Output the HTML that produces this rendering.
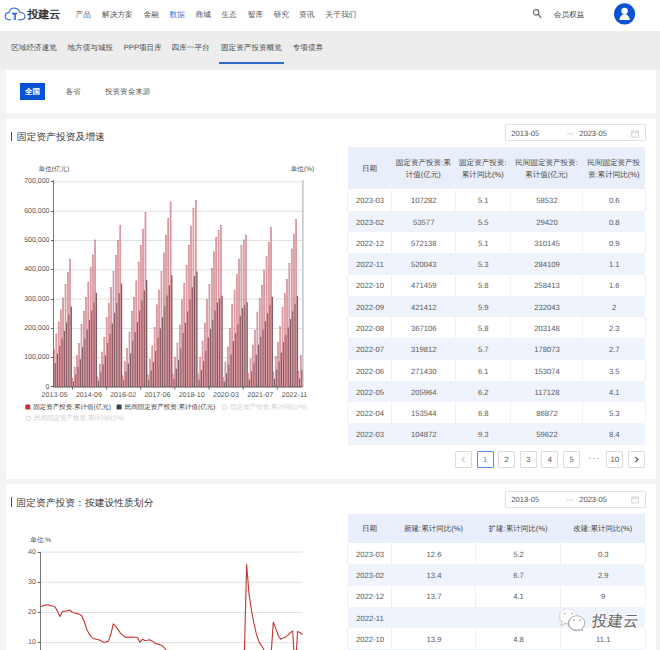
<!DOCTYPE html>
<html><head><meta charset="utf-8">
<style>
*{margin:0;padding:0;box-sizing:border-box}
html,body{width:660px;height:650px;overflow:hidden;background:#f3f3f3;font-family:"Liberation Sans", sans-serif;color:#333;text-rendering:geometricPrecision}
.abs{position:absolute}
.tx{white-space:nowrap}
.hdr{left:0;top:0;width:660px;height:30.5px;background:#fff}
.card{background:#fff;left:5.6px;width:650.6px}
.tbar{width:1.6px;background:#1a4fc4}
.thd{background:#e9effa}
.tro{background:#fff}
.tre{background:#eef3fc}
.vl{width:1px;background:#f0f0f0}
.pgb{width:17px;height:17px;border:0.8px solid #dcdcdc;background:#fff;border-radius:1px}
.pgb.act{border-color:#4d8ee8}
.dp{width:141px;height:17px;border:0.8px solid #e0e0e0;border-radius:1px;background:#fff}
.g{stroke:#d6d6d6;stroke-width:0.75}
.ax{stroke:#555;stroke-width:0.9}
.bt{fill:#f4c0c6;stroke:#bc5c68;stroke-width:0.45}
.bp{fill:#825a61}
</style></head><body>
<div class="abs hdr"></div>
<div class="abs" style="left:0;top:30.5px;width:660px;height:38.8px;background:#ededed"></div>
<svg class="abs" style="left:0;top:0" width="30" height="26" viewBox="0 0 30 26">
<path d="M10.6 19.55 L8.9 19.55 C6.7 19.55 5.25 18.1 5.25 16.15 C5.25 14.2 6.8 12.75 8.85 12.75 C9.35 10.1 11.55 8.05 14.3 8.05 C17 8.05 19.2 9.85 19.75 12.35 C22.7 12.35 25.05 14 25.05 16.15 C25.05 18.15 23.55 19.55 21.5 19.55 L18.6 19.55" fill="none" stroke="#4a80e2" stroke-width="1.35" stroke-linecap="round" stroke-linejoin="round"/>
<rect x="12.1" y="12.8" width="5" height="1.6" fill="#2d5cd4"/>
<rect x="13.75" y="13" width="2.2" height="6.8" fill="#2d5cd4"/>
<rect x="14.45" y="14.6" width="0.8" height="4.2" fill="#a9c3f2"/>
</svg>
<svg class="abs" style="left:532px;top:8.5px" width="11" height="11" viewBox="0 0 11 11"><circle cx="4.15" cy="3.35" r="2.75" fill="none" stroke="#666" stroke-width="1.05"/><line x1="6.2" y1="5.4" x2="8.9" y2="8.6" stroke="#666" stroke-width="1.2" stroke-linecap="round"/></svg>
<svg class="abs" style="left:612.5px;top:3px" width="23" height="23" viewBox="0 0 23 23"><circle cx="11.6" cy="10.9" r="10.6" fill="#0c52d2"/><circle cx="11.6" cy="8.0" r="3.2" fill="#fff"/><path d="M6.5 17.1 C6.5 13.6 8.6 11.2 11.6 11.2 C14.6 11.2 16.7 13.6 16.7 17.1 Z" fill="#fff"/></svg>
<div class="abs" style="left:218.5px;top:62px;width:65px;height:2px;background:#3368cc"></div>
<div class="abs card" style="top:69.5px;height:43.5px"></div>
<div class="abs" style="left:20px;top:82.5px;width:25px;height:17px;background:#0b52d6"></div>
<div class="abs card" style="top:118.5px;height:360px"></div>
<div class="abs tbar" style="left:10.8px;top:131.5px;height:9.5px"></div>
<svg class="abs" style="left:0;top:0" width="340" height="480" viewBox="0 0 340 480">
<line x1="53.5" y1="387.00" x2="302.5" y2="387.00" class="g"/><line x1="51.0" y1="386.50" x2="53.5" y2="386.50" class="ax"/><line x1="53.5" y1="357.70" x2="302.5" y2="357.70" class="g"/><line x1="51.0" y1="357.50" x2="53.5" y2="357.50" class="ax"/><line x1="53.5" y1="328.40" x2="302.5" y2="328.40" class="g"/><line x1="51.0" y1="328.50" x2="53.5" y2="328.50" class="ax"/><line x1="53.5" y1="299.10" x2="302.5" y2="299.10" class="g"/><line x1="51.0" y1="299.50" x2="53.5" y2="299.50" class="ax"/><line x1="53.5" y1="269.80" x2="302.5" y2="269.80" class="g"/><line x1="51.0" y1="269.50" x2="53.5" y2="269.50" class="ax"/><line x1="53.5" y1="240.50" x2="302.5" y2="240.50" class="g"/><line x1="51.0" y1="240.50" x2="53.5" y2="240.50" class="ax"/><line x1="53.5" y1="211.20" x2="302.5" y2="211.20" class="g"/><line x1="51.0" y1="211.50" x2="53.5" y2="211.50" class="ax"/><line x1="53.5" y1="181.90" x2="302.5" y2="181.90" class="g"/><line x1="51.0" y1="181.50" x2="53.5" y2="181.50" class="ax"/>
<rect x="53.592" y="349.06" width="1.0" height="37.94" class="bt"/><rect x="54.642" y="363.10" width="1.3" height="23.90" class="bp"/><rect x="55.877" y="333.88" width="1.0" height="53.12" class="bt"/><rect x="56.927" y="353.53" width="1.3" height="33.47" class="bp"/><rect x="58.161" y="321.95" width="1.0" height="65.05" class="bt"/><rect x="59.211" y="346.02" width="1.3" height="40.98" class="bp"/><rect x="60.445" y="309.94" width="1.0" height="77.06" class="bt"/><rect x="61.495" y="338.45" width="1.3" height="48.55" class="bp"/><rect x="62.730" y="297.93" width="1.0" height="89.07" class="bt"/><rect x="63.780" y="330.88" width="1.3" height="56.12" class="bp"/><rect x="65.014" y="284.45" width="1.0" height="102.55" class="bt"/><rect x="66.064" y="322.39" width="1.3" height="64.61" class="bp"/><rect x="67.299" y="272.14" width="1.0" height="114.86" class="bt"/><rect x="68.349" y="314.64" width="1.3" height="72.36" class="bp"/><rect x="69.583" y="259.11" width="1.0" height="127.89" class="bt"/><rect x="70.633" y="306.43" width="1.3" height="80.57" class="bp"/><rect x="71.867" y="378.21" width="1.0" height="8.79" class="bt"/><rect x="72.917" y="381.37" width="1.3" height="5.63" class="bp"/><rect x="74.152" y="366.99" width="1.0" height="20.01" class="bt"/><rect x="75.202" y="374.19" width="1.3" height="12.81" class="bp"/><rect x="76.436" y="355.65" width="1.0" height="31.35" class="bt"/><rect x="77.486" y="366.94" width="1.3" height="20.06" class="bp"/><rect x="78.721" y="343.64" width="1.0" height="43.36" class="bt"/><rect x="79.771" y="359.25" width="1.3" height="27.75" class="bp"/><rect x="81.005" y="324.59" width="1.0" height="62.41" class="bt"/><rect x="82.055" y="347.06" width="1.3" height="39.94" class="bp"/><rect x="83.289" y="311.41" width="1.0" height="75.59" class="bt"/><rect x="84.339" y="338.62" width="1.3" height="48.38" class="bp"/><rect x="85.574" y="297.34" width="1.0" height="89.66" class="bt"/><rect x="86.624" y="329.62" width="1.3" height="57.38" class="bp"/><rect x="87.858" y="282.11" width="1.0" height="104.89" class="bt"/><rect x="88.908" y="319.87" width="1.3" height="67.13" class="bp"/><rect x="90.143" y="267.46" width="1.0" height="119.54" class="bt"/><rect x="91.193" y="310.49" width="1.3" height="76.51" class="bp"/><rect x="92.427" y="254.86" width="1.0" height="132.14" class="bt"/><rect x="93.477" y="302.43" width="1.3" height="84.57" class="bp"/><rect x="94.711" y="239.91" width="1.0" height="147.09" class="bt"/><rect x="95.761" y="292.86" width="1.3" height="94.14" class="bp"/><rect x="96.996" y="376.89" width="1.0" height="10.11" class="bt"/><rect x="98.046" y="380.53" width="1.3" height="6.47" class="bp"/><rect x="99.280" y="364.29" width="1.0" height="22.71" class="bt"/><rect x="100.330" y="372.47" width="1.3" height="14.53" class="bp"/><rect x="101.565" y="351.99" width="1.0" height="35.01" class="bt"/><rect x="102.615" y="364.59" width="1.3" height="22.41" class="bp"/><rect x="103.849" y="337.48" width="1.0" height="49.52" class="bt"/><rect x="104.899" y="355.31" width="1.3" height="31.69" class="bp"/><rect x="106.133" y="317.56" width="1.0" height="69.44" class="bt"/><rect x="107.183" y="342.56" width="1.3" height="44.44" class="bp"/><rect x="108.418" y="303.50" width="1.0" height="83.50" class="bt"/><rect x="109.468" y="333.56" width="1.3" height="53.44" class="bp"/><rect x="110.702" y="287.67" width="1.0" height="99.33" class="bt"/><rect x="111.752" y="323.43" width="1.3" height="63.57" class="bp"/><rect x="112.987" y="271.26" width="1.0" height="115.73" class="bt"/><rect x="114.037" y="312.93" width="1.3" height="74.07" class="bp"/><rect x="115.271" y="255.74" width="1.0" height="131.26" class="bt"/><rect x="116.321" y="302.99" width="1.3" height="84.01" class="bp"/><rect x="117.556" y="240.50" width="1.0" height="146.50" class="bt"/><rect x="118.606" y="293.24" width="1.3" height="93.76" class="bp"/><rect x="119.840" y="225.38" width="1.0" height="161.62" class="bt"/><rect x="120.890" y="283.56" width="1.3" height="103.44" class="bp"/><rect x="122.124" y="375.87" width="1.0" height="11.13" class="bt"/><rect x="123.174" y="380.19" width="1.3" height="6.81" class="bp"/><rect x="124.409" y="361.80" width="1.0" height="25.20" class="bt"/><rect x="125.459" y="371.58" width="1.3" height="15.42" class="bp"/><rect x="126.693" y="348.62" width="1.0" height="38.38" class="bt"/><rect x="127.743" y="363.51" width="1.3" height="23.49" class="bp"/><rect x="128.978" y="332.21" width="1.0" height="54.79" class="bt"/><rect x="130.028" y="353.47" width="1.3" height="33.53" class="bp"/><rect x="131.262" y="311.29" width="1.0" height="75.71" class="bt"/><rect x="132.312" y="340.66" width="1.3" height="46.34" class="bp"/><rect x="133.546" y="297.34" width="1.0" height="89.66" class="bt"/><rect x="134.596" y="332.13" width="1.3" height="54.87" class="bp"/><rect x="135.831" y="280.93" width="1.0" height="106.07" class="bt"/><rect x="136.881" y="322.09" width="1.3" height="64.91" class="bp"/><rect x="138.115" y="262.18" width="1.0" height="124.82" class="bt"/><rect x="139.165" y="310.61" width="1.3" height="76.39" class="bp"/><rect x="140.400" y="245.77" width="1.0" height="141.23" class="bt"/><rect x="141.450" y="300.57" width="1.3" height="86.43" class="bp"/><rect x="142.684" y="229.07" width="1.0" height="157.93" class="bt"/><rect x="143.734" y="290.35" width="1.3" height="96.65" class="bp"/><rect x="144.968" y="212.23" width="1.0" height="174.77" class="bt"/><rect x="146.018" y="280.04" width="1.3" height="106.96" class="bp"/><rect x="147.253" y="374.99" width="1.0" height="12.01" class="bt"/><rect x="148.303" y="379.74" width="1.3" height="7.26" class="bp"/><rect x="149.537" y="359.52" width="1.0" height="27.48" class="bt"/><rect x="150.587" y="370.40" width="1.3" height="16.60" class="bp"/><rect x="151.822" y="345.98" width="1.0" height="41.02" class="bt"/><rect x="152.872" y="362.22" width="1.3" height="24.78" class="bp"/><rect x="154.106" y="327.52" width="1.0" height="59.48" class="bt"/><rect x="155.156" y="351.07" width="1.3" height="35.93" class="bp"/><rect x="156.390" y="304.78" width="1.0" height="82.22" class="bt"/><rect x="157.440" y="337.34" width="1.3" height="49.66" class="bp"/><rect x="158.675" y="290.02" width="1.0" height="96.98" class="bt"/><rect x="159.725" y="328.42" width="1.3" height="58.58" class="bp"/><rect x="160.959" y="271.56" width="1.0" height="115.44" class="bt"/><rect x="162.009" y="317.27" width="1.3" height="69.73" class="bp"/><rect x="163.244" y="252.81" width="1.0" height="134.19" class="bt"/><rect x="164.294" y="305.95" width="1.3" height="81.05" class="bp"/><rect x="165.528" y="235.52" width="1.0" height="151.48" class="bt"/><rect x="166.578" y="295.51" width="1.3" height="91.49" class="bp"/><rect x="167.812" y="218.23" width="1.0" height="168.77" class="bt"/><rect x="168.862" y="285.06" width="1.3" height="101.94" class="bp"/><rect x="170.097" y="201.91" width="1.0" height="185.09" class="bt"/><rect x="171.147" y="275.21" width="1.3" height="111.79" class="bp"/><rect x="172.381" y="374.02" width="1.0" height="12.98" class="bt"/><rect x="173.431" y="378.95" width="1.3" height="8.05" class="bp"/><rect x="174.666" y="357.70" width="1.0" height="29.30" class="bt"/><rect x="175.716" y="368.83" width="1.3" height="18.17" class="bp"/><rect x="176.950" y="343.05" width="1.0" height="43.95" class="bt"/><rect x="178.000" y="359.75" width="1.3" height="27.25" class="bp"/><rect x="179.234" y="324.88" width="1.0" height="62.12" class="bt"/><rect x="180.284" y="348.49" width="1.3" height="38.51" class="bp"/><rect x="181.519" y="299.89" width="1.0" height="87.11" class="bt"/><rect x="182.569" y="332.99" width="1.3" height="54.01" class="bp"/><rect x="183.803" y="283.57" width="1.0" height="103.43" class="bt"/><rect x="184.853" y="322.87" width="1.3" height="64.13" class="bp"/><rect x="186.088" y="265.11" width="1.0" height="121.89" class="bt"/><rect x="187.138" y="311.43" width="1.3" height="75.57" class="bp"/><rect x="188.372" y="245.48" width="1.0" height="141.52" class="bt"/><rect x="189.422" y="299.26" width="1.3" height="87.74" class="bp"/><rect x="190.656" y="226.14" width="1.0" height="160.86" class="bt"/><rect x="191.706" y="287.27" width="1.3" height="99.73" class="bp"/><rect x="192.941" y="207.98" width="1.0" height="179.02" class="bt"/><rect x="193.991" y="276.01" width="1.3" height="110.99" class="bp"/><rect x="195.225" y="200.77" width="1.0" height="186.23" class="bt"/><rect x="196.275" y="271.54" width="1.3" height="115.46" class="bp"/><rect x="197.510" y="373.87" width="1.0" height="13.13" class="bt"/><rect x="198.560" y="379.58" width="1.3" height="7.42" class="bp"/><rect x="199.794" y="357.14" width="1.0" height="29.86" class="bt"/><rect x="200.844" y="370.13" width="1.3" height="16.87" class="bp"/><rect x="202.078" y="341.38" width="1.0" height="45.62" class="bt"/><rect x="203.128" y="361.22" width="1.3" height="25.78" class="bp"/><rect x="204.363" y="323.10" width="1.0" height="63.90" class="bt"/><rect x="205.413" y="350.89" width="1.3" height="36.11" class="bp"/><rect x="206.647" y="299.36" width="1.0" height="87.64" class="bt"/><rect x="207.697" y="337.49" width="1.3" height="49.51" class="bp"/><rect x="208.932" y="284.36" width="1.0" height="102.64" class="bt"/><rect x="209.982" y="329.01" width="1.3" height="57.99" class="bp"/><rect x="211.216" y="268.48" width="1.0" height="118.52" class="bt"/><rect x="212.266" y="320.04" width="1.3" height="66.96" class="bp"/><rect x="213.500" y="251.87" width="1.0" height="135.13" class="bt"/><rect x="214.550" y="310.65" width="1.3" height="76.35" class="bp"/><rect x="215.785" y="237.45" width="1.0" height="149.55" class="bt"/><rect x="216.835" y="302.51" width="1.3" height="84.49" class="bp"/><rect x="218.069" y="230.54" width="1.0" height="156.46" class="bt"/><rect x="219.119" y="298.60" width="1.3" height="88.40" class="bp"/><rect x="220.354" y="225.41" width="1.0" height="161.59" class="bt"/><rect x="221.404" y="295.70" width="1.3" height="91.30" class="bp"/><rect x="222.638" y="377.24" width="1.0" height="9.76" class="bt"/><rect x="223.688" y="381.57" width="1.3" height="5.43" class="bp"/><rect x="224.922" y="362.36" width="1.0" height="24.64" class="bt"/><rect x="225.972" y="373.27" width="1.3" height="13.73" class="bp"/><rect x="227.207" y="346.92" width="1.0" height="40.08" class="bt"/><rect x="228.257" y="364.67" width="1.3" height="22.33" class="bp"/><rect x="229.491" y="328.63" width="1.0" height="58.37" class="bt"/><rect x="230.541" y="354.49" width="1.3" height="32.51" class="bp"/><rect x="231.776" y="304.49" width="1.0" height="82.51" class="bt"/><rect x="232.826" y="341.04" width="1.3" height="45.96" class="bp"/><rect x="234.060" y="290.54" width="1.0" height="96.46" class="bt"/><rect x="235.110" y="333.27" width="1.3" height="53.73" class="bp"/><rect x="236.344" y="274.69" width="1.0" height="112.31" class="bt"/><rect x="237.394" y="324.45" width="1.3" height="62.55" class="bp"/><rect x="238.629" y="259.11" width="1.0" height="127.89" class="bt"/><rect x="239.679" y="315.76" width="1.3" height="71.24" class="bp"/><rect x="240.913" y="245.13" width="1.0" height="141.87" class="bt"/><rect x="241.963" y="307.98" width="1.3" height="79.02" class="bp"/><rect x="243.198" y="239.91" width="1.0" height="147.09" class="bt"/><rect x="244.248" y="305.07" width="1.3" height="81.93" class="bp"/><rect x="245.482" y="234.96" width="1.0" height="152.04" class="bt"/><rect x="246.532" y="302.32" width="1.3" height="84.68" class="bp"/><rect x="247.767" y="373.76" width="1.0" height="13.24" class="bt"/><rect x="248.817" y="379.52" width="1.3" height="7.48" class="bp"/><rect x="250.051" y="358.87" width="1.0" height="28.13" class="bt"/><rect x="251.101" y="371.11" width="1.3" height="15.89" class="bp"/><rect x="252.335" y="344.95" width="1.0" height="42.05" class="bt"/><rect x="253.385" y="363.24" width="1.3" height="23.76" class="bp"/><rect x="254.620" y="330.19" width="1.0" height="56.81" class="bt"/><rect x="255.670" y="354.90" width="1.3" height="32.10" class="bp"/><rect x="256.904" y="312.02" width="1.0" height="74.98" class="bt"/><rect x="257.954" y="344.64" width="1.3" height="42.36" class="bp"/><rect x="259.189" y="298.28" width="1.0" height="88.72" class="bt"/><rect x="260.239" y="336.87" width="1.3" height="50.13" class="bp"/><rect x="261.473" y="285.36" width="1.0" height="101.64" class="bt"/><rect x="262.523" y="329.57" width="1.3" height="57.43" class="bp"/><rect x="263.757" y="270.44" width="1.0" height="116.56" class="bt"/><rect x="264.807" y="321.15" width="1.3" height="65.85" class="bp"/><rect x="266.042" y="256.56" width="1.0" height="130.44" class="bt"/><rect x="267.092" y="313.30" width="1.3" height="73.70" class="bp"/><rect x="268.326" y="242.23" width="1.0" height="144.77" class="bt"/><rect x="269.376" y="305.20" width="1.3" height="81.80" class="bp"/><rect x="270.611" y="227.46" width="1.0" height="159.54" class="bt"/><rect x="271.661" y="296.86" width="1.3" height="90.14" class="bp"/><rect x="272.895" y="372.12" width="1.0" height="14.88" class="bt"/><rect x="273.945" y="378.93" width="1.3" height="8.07" class="bp"/><rect x="275.179" y="356.27" width="1.0" height="30.73" class="bt"/><rect x="276.229" y="369.53" width="1.3" height="17.47" class="bp"/><rect x="277.464" y="342.02" width="1.0" height="44.98" class="bt"/><rect x="278.514" y="361.55" width="1.3" height="25.45" class="bp"/><rect x="279.748" y="326.64" width="1.0" height="60.36" class="bt"/><rect x="280.798" y="352.68" width="1.3" height="34.32" class="bp"/><rect x="282.033" y="307.48" width="1.0" height="79.52" class="bt"/><rect x="283.083" y="342.15" width="1.3" height="44.85" class="bp"/><rect x="284.317" y="293.30" width="1.0" height="93.70" class="bt"/><rect x="285.367" y="334.82" width="1.3" height="52.18" class="bp"/><rect x="286.601" y="279.44" width="1.0" height="107.56" class="bt"/><rect x="287.651" y="327.48" width="1.3" height="59.52" class="bp"/><rect x="288.886" y="263.53" width="1.0" height="123.47" class="bt"/><rect x="289.936" y="319.01" width="1.3" height="67.99" class="bp"/><rect x="291.170" y="248.85" width="1.0" height="138.15" class="bt"/><rect x="292.220" y="311.28" width="1.3" height="75.72" class="bp"/><rect x="293.455" y="234.64" width="1.0" height="152.36" class="bt"/><rect x="294.505" y="303.76" width="1.3" height="83.24" class="bp"/><rect x="295.739" y="219.37" width="1.0" height="167.63" class="bt"/><rect x="296.789" y="296.13" width="1.3" height="90.87" class="bp"/><rect x="298.023" y="371.30" width="1.0" height="15.70" class="bt"/><rect x="299.073" y="378.38" width="1.3" height="8.62" class="bp"/><rect x="300.308" y="355.56" width="1.0" height="31.44" class="bt"/><rect x="301.358" y="369.85" width="1.3" height="17.15" class="bp"/>
<line x1="53.5" y1="180" x2="53.5" y2="387.0" stroke="#666" stroke-width="0.9"/>
<line x1="302.9" y1="180" x2="302.9" y2="387.0" stroke="#a6b0b8" stroke-width="1.1"/>
<line x1="53.5" y1="387.0" x2="302.5" y2="387.0" stroke="#666" stroke-width="0.9"/>
<line x1="72.50" y1="387.0" x2="72.50" y2="389.5" stroke="#555" stroke-width="0.9"/><line x1="106.63" y1="387.0" x2="106.63" y2="389.5" stroke="#555" stroke-width="0.9"/><line x1="140.76" y1="387.0" x2="140.76" y2="389.5" stroke="#555" stroke-width="0.9"/><line x1="174.89" y1="387.0" x2="174.89" y2="389.5" stroke="#555" stroke-width="0.9"/><line x1="209.02" y1="387.0" x2="209.02" y2="389.5" stroke="#555" stroke-width="0.9"/><line x1="243.15" y1="387.0" x2="243.15" y2="389.5" stroke="#555" stroke-width="0.9"/><line x1="277.28" y1="387.0" x2="277.28" y2="389.5" stroke="#555" stroke-width="0.9"/>
<rect x="25.3" y="404.6" width="5" height="5" fill="#c23531" rx="0.8"/>
<rect x="116.6" y="404.6" width="5" height="5" fill="#2f4554" rx="0.8"/>
<circle cx="224.5" cy="407.3" r="2.3" fill="none" stroke="#ccc" stroke-width="0.8"/>
<circle cx="28.4" cy="418.6" r="2.3" fill="none" stroke="#ccc" stroke-width="0.8"/>
</svg>
<div class="abs dp" style="left:504.5px;top:124.3px"></div>
<svg class="abs" style="left:566px;top:132.1px" width="8" height="4" viewBox="0 0 8 4"><path d="M0.5 2 H7 M5.6 1 L7 2" fill="none" stroke="#c8c8c8" stroke-width="0.6"/></svg>
<svg class="abs" style="left:630px;top:129.8px" width="10" height="8" viewBox="0 0 10 8"><rect x="1.8" y="1.1" width="6.6" height="5.9" fill="none" stroke="#c4c4c4" stroke-width="0.7"/><line x1="1.8" y1="2.7" x2="8.4" y2="2.7" stroke="#c4c4c4" stroke-width="0.6"/><line x1="3.6" y1="0.3" x2="3.6" y2="1.5" stroke="#c4c4c4" stroke-width="0.6"/><line x1="6.6" y1="0.3" x2="6.6" y2="1.5" stroke="#c4c4c4" stroke-width="0.6"/></svg>
<div class="abs thd" style="left:347.5px;top:147.2px;width:297.5px;height:42.3px"></div><div class="abs tro" style="left:347.5px;top:189.50px;width:297.5px;height:21.27px"></div><div class="abs vl" style="left:347.0px;top:189.50px;height:21.27px"></div><div class="abs vl" style="left:391.0px;top:189.50px;height:21.27px"></div><div class="abs vl" style="left:454.5px;top:189.50px;height:21.27px"></div><div class="abs vl" style="left:510.0px;top:189.50px;height:21.27px"></div><div class="abs vl" style="left:582.0px;top:189.50px;height:21.27px"></div><div class="abs vl" style="left:644.5px;top:189.50px;height:21.27px"></div><div class="abs tre" style="left:347.5px;top:210.77px;width:297.5px;height:21.27px"></div><div class="abs tro" style="left:347.5px;top:232.04px;width:297.5px;height:21.27px"></div><div class="abs vl" style="left:347.0px;top:232.04px;height:21.27px"></div><div class="abs vl" style="left:391.0px;top:232.04px;height:21.27px"></div><div class="abs vl" style="left:454.5px;top:232.04px;height:21.27px"></div><div class="abs vl" style="left:510.0px;top:232.04px;height:21.27px"></div><div class="abs vl" style="left:582.0px;top:232.04px;height:21.27px"></div><div class="abs vl" style="left:644.5px;top:232.04px;height:21.27px"></div><div class="abs tre" style="left:347.5px;top:253.31px;width:297.5px;height:21.27px"></div><div class="abs tro" style="left:347.5px;top:274.58px;width:297.5px;height:21.27px"></div><div class="abs vl" style="left:347.0px;top:274.58px;height:21.27px"></div><div class="abs vl" style="left:391.0px;top:274.58px;height:21.27px"></div><div class="abs vl" style="left:454.5px;top:274.58px;height:21.27px"></div><div class="abs vl" style="left:510.0px;top:274.58px;height:21.27px"></div><div class="abs vl" style="left:582.0px;top:274.58px;height:21.27px"></div><div class="abs vl" style="left:644.5px;top:274.58px;height:21.27px"></div><div class="abs tre" style="left:347.5px;top:295.85px;width:297.5px;height:21.27px"></div><div class="abs tro" style="left:347.5px;top:317.12px;width:297.5px;height:21.27px"></div><div class="abs vl" style="left:347.0px;top:317.12px;height:21.27px"></div><div class="abs vl" style="left:391.0px;top:317.12px;height:21.27px"></div><div class="abs vl" style="left:454.5px;top:317.12px;height:21.27px"></div><div class="abs vl" style="left:510.0px;top:317.12px;height:21.27px"></div><div class="abs vl" style="left:582.0px;top:317.12px;height:21.27px"></div><div class="abs vl" style="left:644.5px;top:317.12px;height:21.27px"></div><div class="abs tre" style="left:347.5px;top:338.39px;width:297.5px;height:21.27px"></div><div class="abs tro" style="left:347.5px;top:359.66px;width:297.5px;height:21.27px"></div><div class="abs vl" style="left:347.0px;top:359.66px;height:21.27px"></div><div class="abs vl" style="left:391.0px;top:359.66px;height:21.27px"></div><div class="abs vl" style="left:454.5px;top:359.66px;height:21.27px"></div><div class="abs vl" style="left:510.0px;top:359.66px;height:21.27px"></div><div class="abs vl" style="left:582.0px;top:359.66px;height:21.27px"></div><div class="abs vl" style="left:644.5px;top:359.66px;height:21.27px"></div><div class="abs tre" style="left:347.5px;top:380.93px;width:297.5px;height:21.27px"></div><div class="abs tro" style="left:347.5px;top:402.20px;width:297.5px;height:21.27px"></div><div class="abs vl" style="left:347.0px;top:402.20px;height:21.27px"></div><div class="abs vl" style="left:391.0px;top:402.20px;height:21.27px"></div><div class="abs vl" style="left:454.5px;top:402.20px;height:21.27px"></div><div class="abs vl" style="left:510.0px;top:402.20px;height:21.27px"></div><div class="abs vl" style="left:582.0px;top:402.20px;height:21.27px"></div><div class="abs vl" style="left:644.5px;top:402.20px;height:21.27px"></div><div class="abs tre" style="left:347.5px;top:423.47px;width:297.5px;height:21.27px"></div>
<div class="abs pgb" style="left:455px;top:450.5px"></div><svg class="abs" style="left:455px;top:450.5px" width="17" height="17" viewBox="0 0 17 17"><path d="M9.6 6 L7 8.5 L9.6 11" fill="none" stroke="#ccc" stroke-width="1.05"/></svg><div class="abs pgb act" style="left:476.6px;top:450.5px"></div><div class="abs pgb" style="left:498.2px;top:450.5px"></div><div class="abs pgb" style="left:519.8px;top:450.5px"></div><div class="abs pgb" style="left:541.4px;top:450.5px"></div><div class="abs pgb" style="left:563.2px;top:450.5px"></div><svg class="abs" style="left:586px;top:456px" width="16" height="5" viewBox="0 0 16 5"><circle cx="3.6" cy="2.4" r="0.7" fill="#aaa"/><circle cx="7.9" cy="2.4" r="0.7" fill="#aaa"/><circle cx="12.2" cy="2.4" r="0.7" fill="#aaa"/></svg><div class="abs pgb" style="left:606.2px;top:450.5px"></div><div class="abs pgb" style="left:628.3px;top:450.5px"></div><svg class="abs" style="left:628.3px;top:450.5px" width="17" height="17" viewBox="0 0 17 17"><path d="M7.4 6 L10 8.5 L7.4 11" fill="none" stroke="#555" stroke-width="1.05"/></svg>
<div class="abs card" style="top:483.8px;height:200px"></div>
<div class="abs tbar" style="left:10.8px;top:497px;height:9.5px"></div>
<svg class="abs" style="left:0;top:480px" width="340" height="170" viewBox="0 480 340 170">
<line x1="40.5" y1="552.10" x2="302.4" y2="552.10" class="g"/><line x1="37.7" y1="552.50" x2="40.5" y2="552.50" class="ax"/><line x1="40.5" y1="582.30" x2="302.4" y2="582.30" class="g"/><line x1="37.7" y1="582.50" x2="40.5" y2="582.50" class="ax"/><line x1="40.5" y1="612.50" x2="302.4" y2="612.50" class="g"/><line x1="37.7" y1="612.50" x2="40.5" y2="612.50" class="ax"/><line x1="40.5" y1="642.70" x2="302.4" y2="642.70" class="g"/><line x1="37.7" y1="642.50" x2="40.5" y2="642.50" class="ax"/><line x1="40.5" y1="672.90" x2="302.4" y2="672.90" class="g"/><line x1="37.7" y1="672.50" x2="40.5" y2="672.50" class="ax"/>
<line x1="40.5" y1="552" x2="40.5" y2="680" stroke="#666" stroke-width="0.9"/>
<polyline points="40.50,606.46 42.92,605.96 45.35,604.99 47.77,604.75 50.20,605.63 52.62,605.98 55.05,606.91 57.47,611.14 59.90,616.43 62.33,611.83 64.75,611.02 67.17,611.02 69.60,609.98 72.03,612.00 74.45,612.94 76.88,613.38 79.30,614.31 81.72,615.72 84.15,621.23 86.57,628.88 89.00,633.57 91.42,636.85 93.85,638.65 96.28,639.23 98.70,639.81 101.12,640.92 103.55,642.26 105.97,642.08 108.40,641.12 110.82,634.57 113.25,623.86 115.67,626.27 118.10,629.58 120.52,633.27 122.95,635.32 125.38,637.19 127.80,637.35 130.22,637.07 132.65,637.10 135.07,637.32 137.50,637.54 139.93,642.30 142.35,639.31 144.77,640.47 147.20,640.22 149.62,639.80 152.05,640.93 154.47,642.71 156.90,643.88 159.32,644.43 161.75,645.45 164.18,647.59 166.60,650.25 169.02,653.27 171.45,654.35 173.87,655.43 176.30,656.51 178.72,657.58 181.15,658.66 183.57,659.74 186.00,660.82 188.42,661.12 190.85,661.42 193.27,661.73 195.70,662.03 198.12,662.33 200.55,662.63 202.97,662.93 205.40,663.24 207.82,663.54 210.25,663.84 212.67,672.52 215.10,681.21 217.52,689.89 219.95,698.57 222.38,707.25 224.80,715.93 227.22,724.62 229.65,733.30 232.07,721.22 234.50,709.14 236.92,697.06 239.35,684.98 241.77,672.90 244.20,660.82 246.62,564.48 249.05,594.38 251.47,610.30 253.90,623.19 256.32,633.94 258.75,641.19 261.17,645.10 263.60,649.53 266.02,654.78 268.45,656.29 270.88,657.80 273.30,622.16 275.73,628.42 278.15,635.30 280.57,639.18 283.00,638.01 285.42,637.20 287.85,635.20 290.27,632.81 292.70,630.92 295.12,672.90 297.55,631.53 299.97,632.43 302.40,634.85" fill="none" stroke="#c23531" stroke-width="1.1" stroke-linejoin="round"/>
</svg>
<div class="abs dp" style="left:504.5px;top:490.5px"></div>
<svg class="abs" style="left:566px;top:498.3px" width="8" height="4" viewBox="0 0 8 4"><path d="M0.5 2 H7 M5.6 1 L7 2" fill="none" stroke="#c8c8c8" stroke-width="0.6"/></svg>
<svg class="abs" style="left:630px;top:496.0px" width="10" height="8" viewBox="0 0 10 8"><rect x="1.8" y="1.1" width="6.6" height="5.9" fill="none" stroke="#c4c4c4" stroke-width="0.7"/><line x1="1.8" y1="2.7" x2="8.4" y2="2.7" stroke="#c4c4c4" stroke-width="0.6"/><line x1="3.6" y1="0.3" x2="3.6" y2="1.5" stroke="#c4c4c4" stroke-width="0.6"/><line x1="6.6" y1="0.3" x2="6.6" y2="1.5" stroke="#c4c4c4" stroke-width="0.6"/></svg>
<div class="abs thd" style="left:347.5px;top:513.5px;width:297.5px;height:29.5px"></div><div class="abs tro" style="left:347.5px;top:543.00px;width:297.5px;height:21.27px"></div><div class="abs vl" style="left:347.0px;top:543.00px;height:21.27px"></div><div class="abs vl" style="left:391.0px;top:543.00px;height:21.27px"></div><div class="abs vl" style="left:475.0px;top:543.00px;height:21.27px"></div><div class="abs vl" style="left:560.0px;top:543.00px;height:21.27px"></div><div class="abs vl" style="left:644.5px;top:543.00px;height:21.27px"></div><div class="abs tre" style="left:347.5px;top:564.27px;width:297.5px;height:21.27px"></div><div class="abs tro" style="left:347.5px;top:585.54px;width:297.5px;height:21.27px"></div><div class="abs vl" style="left:347.0px;top:585.54px;height:21.27px"></div><div class="abs vl" style="left:391.0px;top:585.54px;height:21.27px"></div><div class="abs vl" style="left:475.0px;top:585.54px;height:21.27px"></div><div class="abs vl" style="left:560.0px;top:585.54px;height:21.27px"></div><div class="abs vl" style="left:644.5px;top:585.54px;height:21.27px"></div><div class="abs tre" style="left:347.5px;top:606.81px;width:297.5px;height:21.27px"></div><div class="abs tro" style="left:347.5px;top:628.08px;width:297.5px;height:21.27px"></div><div class="abs vl" style="left:347.0px;top:628.08px;height:21.27px"></div><div class="abs vl" style="left:391.0px;top:628.08px;height:21.27px"></div><div class="abs vl" style="left:475.0px;top:628.08px;height:21.27px"></div><div class="abs vl" style="left:560.0px;top:628.08px;height:21.27px"></div><div class="abs vl" style="left:644.5px;top:628.08px;height:21.27px"></div><div class="abs tre" style="left:347.5px;top:649.35px;width:297.5px;height:21.27px"></div>
<div class="abs tx" style="left:-250.50px;width:300px;top:383.50px;font-size:7.0px;line-height:7.0px;color:#555;font-weight:normal;text-align:right;">0</div><div class="abs tx" style="left:-250.50px;width:300px;top:354.20px;font-size:7.0px;line-height:7.0px;color:#555;font-weight:normal;text-align:right;">100,000</div><div class="abs tx" style="left:-250.50px;width:300px;top:324.90px;font-size:7.0px;line-height:7.0px;color:#555;font-weight:normal;text-align:right;">200,000</div><div class="abs tx" style="left:-250.50px;width:300px;top:295.60px;font-size:7.0px;line-height:7.0px;color:#555;font-weight:normal;text-align:right;">300,000</div><div class="abs tx" style="left:-250.50px;width:300px;top:266.30px;font-size:7.0px;line-height:7.0px;color:#555;font-weight:normal;text-align:right;">400,000</div><div class="abs tx" style="left:-250.50px;width:300px;top:237.00px;font-size:7.0px;line-height:7.0px;color:#555;font-weight:normal;text-align:right;">500,000</div><div class="abs tx" style="left:-250.50px;width:300px;top:207.70px;font-size:7.0px;line-height:7.0px;color:#555;font-weight:normal;text-align:right;">600,000</div><div class="abs tx" style="left:-250.50px;width:300px;top:178.40px;font-size:7.0px;line-height:7.0px;color:#555;font-weight:normal;text-align:right;">700,000</div><div class="abs tx" style="left:-95.36px;width:300px;top:391.55px;font-size:7.1px;line-height:7.1px;color:#555;font-weight:normal;text-align:center;">2013-05</div><div class="abs tx" style="left:-61.09px;width:300px;top:391.55px;font-size:7.1px;line-height:7.1px;color:#555;font-weight:normal;text-align:center;">2014-09</div><div class="abs tx" style="left:-26.83px;width:300px;top:391.55px;font-size:7.1px;line-height:7.1px;color:#555;font-weight:normal;text-align:center;">2016-02</div><div class="abs tx" style="left:7.44px;width:300px;top:391.55px;font-size:7.1px;line-height:7.1px;color:#555;font-weight:normal;text-align:center;">2017-06</div><div class="abs tx" style="left:41.71px;width:300px;top:391.55px;font-size:7.1px;line-height:7.1px;color:#555;font-weight:normal;text-align:center;">2018-10</div><div class="abs tx" style="left:75.97px;width:300px;top:391.55px;font-size:7.1px;line-height:7.1px;color:#555;font-weight:normal;text-align:center;">2020-03</div><div class="abs tx" style="left:110.24px;width:300px;top:391.55px;font-size:7.1px;line-height:7.1px;color:#555;font-weight:normal;text-align:center;">2021-07</div><div class="abs tx" style="left:144.50px;width:300px;top:391.55px;font-size:7.1px;line-height:7.1px;color:#555;font-weight:normal;text-align:center;">2022-11</div><div class="abs tx" style="left:-96.00px;width:300px;top:166.90px;font-size:6.6px;line-height:6.6px;color:#444;font-weight:normal;text-align:center;">单位(亿元)</div><div class="abs tx" style="left:152.50px;width:300px;top:166.90px;font-size:6.6px;line-height:6.6px;color:#444;font-weight:normal;text-align:center;">单位(%)</div><div class="abs tx" style="left:33.30px;top:404.55px;font-size:6.5px;line-height:6.5px;color:#333;font-weight:normal;text-align:left;">固定资产投资:累计值(亿元)</div><div class="abs tx" style="left:124.70px;top:404.55px;font-size:6.5px;line-height:6.5px;color:#333;font-weight:normal;text-align:left;">民间固定资产投资:累计值(亿元)</div><div class="abs tx" style="left:230.00px;top:404.55px;font-size:6.5px;line-height:6.5px;color:#ccc;font-weight:normal;text-align:left;">固定资产投资:累计同比(%)</div><div class="abs tx" style="left:34.00px;top:415.95px;font-size:6.5px;line-height:6.5px;color:#ccc;font-weight:normal;text-align:left;">民间固定资产投资:累计同比(%)</div><div class="abs tx" style="left:-264.10px;width:300px;top:548.60px;font-size:7.0px;line-height:7.0px;color:#555;font-weight:normal;text-align:right;">40</div><div class="abs tx" style="left:-264.10px;width:300px;top:578.80px;font-size:7.0px;line-height:7.0px;color:#555;font-weight:normal;text-align:right;">30</div><div class="abs tx" style="left:-264.10px;width:300px;top:609.00px;font-size:7.0px;line-height:7.0px;color:#555;font-weight:normal;text-align:right;">20</div><div class="abs tx" style="left:-264.10px;width:300px;top:639.20px;font-size:7.0px;line-height:7.0px;color:#555;font-weight:normal;text-align:right;">10</div><div class="abs tx" style="left:30.30px;top:538.30px;font-size:6.6px;line-height:6.6px;color:#444;font-weight:normal;text-align:left;">单位:%</div><div class="abs tx" style="left:219.50px;width:300px;top:165.17px;font-size:7.55px;line-height:7.55px;color:#444;font-weight:normal;text-align:center;">日期</div><div class="abs tx" style="left:273.25px;width:300px;top:159.17px;font-size:7.55px;line-height:7.55px;color:#444;font-weight:normal;text-align:center;">固定资产投资:累</div><div class="abs tx" style="left:273.25px;width:300px;top:171.17px;font-size:7.55px;line-height:7.55px;color:#444;font-weight:normal;text-align:center;">计值(亿元)</div><div class="abs tx" style="left:332.75px;width:300px;top:159.17px;font-size:7.55px;line-height:7.55px;color:#444;font-weight:normal;text-align:center;">固定资产投资:</div><div class="abs tx" style="left:332.75px;width:300px;top:171.17px;font-size:7.55px;line-height:7.55px;color:#444;font-weight:normal;text-align:center;">累计同比(%)</div><div class="abs tx" style="left:396.50px;width:300px;top:159.17px;font-size:7.55px;line-height:7.55px;color:#444;font-weight:normal;text-align:center;">民间固定资产投资:</div><div class="abs tx" style="left:396.50px;width:300px;top:171.17px;font-size:7.55px;line-height:7.55px;color:#444;font-weight:normal;text-align:center;">累计值(亿元)</div><div class="abs tx" style="left:463.75px;width:300px;top:159.17px;font-size:7.55px;line-height:7.55px;color:#444;font-weight:normal;text-align:center;">民间固定资产投</div><div class="abs tx" style="left:463.75px;width:300px;top:171.17px;font-size:7.55px;line-height:7.55px;color:#444;font-weight:normal;text-align:center;">资:累计同比(%)</div><div class="abs tx" style="left:220.00px;width:300px;top:197.38px;font-size:7.7px;line-height:7.7px;color:#5a5a5a;font-weight:normal;text-align:center;">2023-03</div><div class="abs tx" style="left:273.75px;width:300px;top:197.38px;font-size:7.7px;line-height:7.7px;color:#5a5a5a;font-weight:normal;text-align:center;">107282</div><div class="abs tx" style="left:333.25px;width:300px;top:197.38px;font-size:7.7px;line-height:7.7px;color:#5a5a5a;font-weight:normal;text-align:center;">5.1</div><div class="abs tx" style="left:397.00px;width:300px;top:197.38px;font-size:7.7px;line-height:7.7px;color:#5a5a5a;font-weight:normal;text-align:center;">58532</div><div class="abs tx" style="left:464.25px;width:300px;top:197.38px;font-size:7.7px;line-height:7.7px;color:#5a5a5a;font-weight:normal;text-align:center;">0.6</div><div class="abs tx" style="left:220.00px;width:300px;top:218.66px;font-size:7.7px;line-height:7.7px;color:#5a5a5a;font-weight:normal;text-align:center;">2023-02</div><div class="abs tx" style="left:273.75px;width:300px;top:218.66px;font-size:7.7px;line-height:7.7px;color:#5a5a5a;font-weight:normal;text-align:center;">53577</div><div class="abs tx" style="left:333.25px;width:300px;top:218.66px;font-size:7.7px;line-height:7.7px;color:#5a5a5a;font-weight:normal;text-align:center;">5.5</div><div class="abs tx" style="left:397.00px;width:300px;top:218.66px;font-size:7.7px;line-height:7.7px;color:#5a5a5a;font-weight:normal;text-align:center;">29420</div><div class="abs tx" style="left:464.25px;width:300px;top:218.66px;font-size:7.7px;line-height:7.7px;color:#5a5a5a;font-weight:normal;text-align:center;">0.8</div><div class="abs tx" style="left:220.00px;width:300px;top:239.92px;font-size:7.7px;line-height:7.7px;color:#5a5a5a;font-weight:normal;text-align:center;">2022-12</div><div class="abs tx" style="left:273.75px;width:300px;top:239.92px;font-size:7.7px;line-height:7.7px;color:#5a5a5a;font-weight:normal;text-align:center;">572138</div><div class="abs tx" style="left:333.25px;width:300px;top:239.92px;font-size:7.7px;line-height:7.7px;color:#5a5a5a;font-weight:normal;text-align:center;">5.1</div><div class="abs tx" style="left:397.00px;width:300px;top:239.92px;font-size:7.7px;line-height:7.7px;color:#5a5a5a;font-weight:normal;text-align:center;">310145</div><div class="abs tx" style="left:464.25px;width:300px;top:239.92px;font-size:7.7px;line-height:7.7px;color:#5a5a5a;font-weight:normal;text-align:center;">0.9</div><div class="abs tx" style="left:220.00px;width:300px;top:261.19px;font-size:7.7px;line-height:7.7px;color:#5a5a5a;font-weight:normal;text-align:center;">2022-11</div><div class="abs tx" style="left:273.75px;width:300px;top:261.19px;font-size:7.7px;line-height:7.7px;color:#5a5a5a;font-weight:normal;text-align:center;">520043</div><div class="abs tx" style="left:333.25px;width:300px;top:261.19px;font-size:7.7px;line-height:7.7px;color:#5a5a5a;font-weight:normal;text-align:center;">5.3</div><div class="abs tx" style="left:397.00px;width:300px;top:261.19px;font-size:7.7px;line-height:7.7px;color:#5a5a5a;font-weight:normal;text-align:center;">284109</div><div class="abs tx" style="left:464.25px;width:300px;top:261.19px;font-size:7.7px;line-height:7.7px;color:#5a5a5a;font-weight:normal;text-align:center;">1.1</div><div class="abs tx" style="left:220.00px;width:300px;top:282.46px;font-size:7.7px;line-height:7.7px;color:#5a5a5a;font-weight:normal;text-align:center;">2022-10</div><div class="abs tx" style="left:273.75px;width:300px;top:282.46px;font-size:7.7px;line-height:7.7px;color:#5a5a5a;font-weight:normal;text-align:center;">471459</div><div class="abs tx" style="left:333.25px;width:300px;top:282.46px;font-size:7.7px;line-height:7.7px;color:#5a5a5a;font-weight:normal;text-align:center;">5.8</div><div class="abs tx" style="left:397.00px;width:300px;top:282.46px;font-size:7.7px;line-height:7.7px;color:#5a5a5a;font-weight:normal;text-align:center;">258413</div><div class="abs tx" style="left:464.25px;width:300px;top:282.46px;font-size:7.7px;line-height:7.7px;color:#5a5a5a;font-weight:normal;text-align:center;">1.6</div><div class="abs tx" style="left:220.00px;width:300px;top:303.74px;font-size:7.7px;line-height:7.7px;color:#5a5a5a;font-weight:normal;text-align:center;">2022-09</div><div class="abs tx" style="left:273.75px;width:300px;top:303.74px;font-size:7.7px;line-height:7.7px;color:#5a5a5a;font-weight:normal;text-align:center;">421412</div><div class="abs tx" style="left:333.25px;width:300px;top:303.74px;font-size:7.7px;line-height:7.7px;color:#5a5a5a;font-weight:normal;text-align:center;">5.9</div><div class="abs tx" style="left:397.00px;width:300px;top:303.74px;font-size:7.7px;line-height:7.7px;color:#5a5a5a;font-weight:normal;text-align:center;">232043</div><div class="abs tx" style="left:464.25px;width:300px;top:303.74px;font-size:7.7px;line-height:7.7px;color:#5a5a5a;font-weight:normal;text-align:center;">2</div><div class="abs tx" style="left:220.00px;width:300px;top:325.00px;font-size:7.7px;line-height:7.7px;color:#5a5a5a;font-weight:normal;text-align:center;">2022-08</div><div class="abs tx" style="left:273.75px;width:300px;top:325.00px;font-size:7.7px;line-height:7.7px;color:#5a5a5a;font-weight:normal;text-align:center;">367106</div><div class="abs tx" style="left:333.25px;width:300px;top:325.00px;font-size:7.7px;line-height:7.7px;color:#5a5a5a;font-weight:normal;text-align:center;">5.8</div><div class="abs tx" style="left:397.00px;width:300px;top:325.00px;font-size:7.7px;line-height:7.7px;color:#5a5a5a;font-weight:normal;text-align:center;">203148</div><div class="abs tx" style="left:464.25px;width:300px;top:325.00px;font-size:7.7px;line-height:7.7px;color:#5a5a5a;font-weight:normal;text-align:center;">2.3</div><div class="abs tx" style="left:220.00px;width:300px;top:346.27px;font-size:7.7px;line-height:7.7px;color:#5a5a5a;font-weight:normal;text-align:center;">2022-07</div><div class="abs tx" style="left:273.75px;width:300px;top:346.27px;font-size:7.7px;line-height:7.7px;color:#5a5a5a;font-weight:normal;text-align:center;">319812</div><div class="abs tx" style="left:333.25px;width:300px;top:346.27px;font-size:7.7px;line-height:7.7px;color:#5a5a5a;font-weight:normal;text-align:center;">5.7</div><div class="abs tx" style="left:397.00px;width:300px;top:346.27px;font-size:7.7px;line-height:7.7px;color:#5a5a5a;font-weight:normal;text-align:center;">178073</div><div class="abs tx" style="left:464.25px;width:300px;top:346.27px;font-size:7.7px;line-height:7.7px;color:#5a5a5a;font-weight:normal;text-align:center;">2.7</div><div class="abs tx" style="left:220.00px;width:300px;top:367.54px;font-size:7.7px;line-height:7.7px;color:#5a5a5a;font-weight:normal;text-align:center;">2022-06</div><div class="abs tx" style="left:273.75px;width:300px;top:367.54px;font-size:7.7px;line-height:7.7px;color:#5a5a5a;font-weight:normal;text-align:center;">271430</div><div class="abs tx" style="left:333.25px;width:300px;top:367.54px;font-size:7.7px;line-height:7.7px;color:#5a5a5a;font-weight:normal;text-align:center;">6.1</div><div class="abs tx" style="left:397.00px;width:300px;top:367.54px;font-size:7.7px;line-height:7.7px;color:#5a5a5a;font-weight:normal;text-align:center;">153074</div><div class="abs tx" style="left:464.25px;width:300px;top:367.54px;font-size:7.7px;line-height:7.7px;color:#5a5a5a;font-weight:normal;text-align:center;">3.5</div><div class="abs tx" style="left:220.00px;width:300px;top:388.81px;font-size:7.7px;line-height:7.7px;color:#5a5a5a;font-weight:normal;text-align:center;">2022-05</div><div class="abs tx" style="left:273.75px;width:300px;top:388.81px;font-size:7.7px;line-height:7.7px;color:#5a5a5a;font-weight:normal;text-align:center;">205964</div><div class="abs tx" style="left:333.25px;width:300px;top:388.81px;font-size:7.7px;line-height:7.7px;color:#5a5a5a;font-weight:normal;text-align:center;">6.2</div><div class="abs tx" style="left:397.00px;width:300px;top:388.81px;font-size:7.7px;line-height:7.7px;color:#5a5a5a;font-weight:normal;text-align:center;">117128</div><div class="abs tx" style="left:464.25px;width:300px;top:388.81px;font-size:7.7px;line-height:7.7px;color:#5a5a5a;font-weight:normal;text-align:center;">4.1</div><div class="abs tx" style="left:220.00px;width:300px;top:410.08px;font-size:7.7px;line-height:7.7px;color:#5a5a5a;font-weight:normal;text-align:center;">2022-04</div><div class="abs tx" style="left:273.75px;width:300px;top:410.08px;font-size:7.7px;line-height:7.7px;color:#5a5a5a;font-weight:normal;text-align:center;">153544</div><div class="abs tx" style="left:333.25px;width:300px;top:410.08px;font-size:7.7px;line-height:7.7px;color:#5a5a5a;font-weight:normal;text-align:center;">6.8</div><div class="abs tx" style="left:397.00px;width:300px;top:410.08px;font-size:7.7px;line-height:7.7px;color:#5a5a5a;font-weight:normal;text-align:center;">86872</div><div class="abs tx" style="left:464.25px;width:300px;top:410.08px;font-size:7.7px;line-height:7.7px;color:#5a5a5a;font-weight:normal;text-align:center;">5.3</div><div class="abs tx" style="left:220.00px;width:300px;top:431.36px;font-size:7.7px;line-height:7.7px;color:#5a5a5a;font-weight:normal;text-align:center;">2022-03</div><div class="abs tx" style="left:273.75px;width:300px;top:431.36px;font-size:7.7px;line-height:7.7px;color:#5a5a5a;font-weight:normal;text-align:center;">104872</div><div class="abs tx" style="left:333.25px;width:300px;top:431.36px;font-size:7.7px;line-height:7.7px;color:#5a5a5a;font-weight:normal;text-align:center;">9.3</div><div class="abs tx" style="left:397.00px;width:300px;top:431.36px;font-size:7.7px;line-height:7.7px;color:#5a5a5a;font-weight:normal;text-align:center;">59622</div><div class="abs tx" style="left:464.25px;width:300px;top:431.36px;font-size:7.7px;line-height:7.7px;color:#5a5a5a;font-weight:normal;text-align:center;">8.4</div><div class="abs tx" style="left:219.50px;width:300px;top:525.08px;font-size:7.55px;line-height:7.55px;color:#444;font-weight:normal;text-align:center;">日期</div><div class="abs tx" style="left:283.50px;width:300px;top:525.08px;font-size:7.55px;line-height:7.55px;color:#444;font-weight:normal;text-align:center;">新建:累计同比(%)</div><div class="abs tx" style="left:368.00px;width:300px;top:525.08px;font-size:7.55px;line-height:7.55px;color:#444;font-weight:normal;text-align:center;">扩建:累计同比(%)</div><div class="abs tx" style="left:452.75px;width:300px;top:525.08px;font-size:7.55px;line-height:7.55px;color:#444;font-weight:normal;text-align:center;">改建:累计同比(%)</div><div class="abs tx" style="left:220.00px;width:300px;top:550.88px;font-size:7.7px;line-height:7.7px;color:#5a5a5a;font-weight:normal;text-align:center;">2023-03</div><div class="abs tx" style="left:284.00px;width:300px;top:550.88px;font-size:7.7px;line-height:7.7px;color:#5a5a5a;font-weight:normal;text-align:center;">12.6</div><div class="abs tx" style="left:368.50px;width:300px;top:550.88px;font-size:7.7px;line-height:7.7px;color:#5a5a5a;font-weight:normal;text-align:center;">5.2</div><div class="abs tx" style="left:453.25px;width:300px;top:550.88px;font-size:7.7px;line-height:7.7px;color:#5a5a5a;font-weight:normal;text-align:center;">0.3</div><div class="abs tx" style="left:220.00px;width:300px;top:572.15px;font-size:7.7px;line-height:7.7px;color:#5a5a5a;font-weight:normal;text-align:center;">2023-02</div><div class="abs tx" style="left:284.00px;width:300px;top:572.15px;font-size:7.7px;line-height:7.7px;color:#5a5a5a;font-weight:normal;text-align:center;">13.4</div><div class="abs tx" style="left:368.50px;width:300px;top:572.15px;font-size:7.7px;line-height:7.7px;color:#5a5a5a;font-weight:normal;text-align:center;">6.7</div><div class="abs tx" style="left:453.25px;width:300px;top:572.15px;font-size:7.7px;line-height:7.7px;color:#5a5a5a;font-weight:normal;text-align:center;">2.9</div><div class="abs tx" style="left:220.00px;width:300px;top:593.42px;font-size:7.7px;line-height:7.7px;color:#5a5a5a;font-weight:normal;text-align:center;">2022-12</div><div class="abs tx" style="left:284.00px;width:300px;top:593.42px;font-size:7.7px;line-height:7.7px;color:#5a5a5a;font-weight:normal;text-align:center;">13.7</div><div class="abs tx" style="left:368.50px;width:300px;top:593.42px;font-size:7.7px;line-height:7.7px;color:#5a5a5a;font-weight:normal;text-align:center;">4.1</div><div class="abs tx" style="left:453.25px;width:300px;top:593.42px;font-size:7.7px;line-height:7.7px;color:#5a5a5a;font-weight:normal;text-align:center;">9</div><div class="abs tx" style="left:220.00px;width:300px;top:614.69px;font-size:7.7px;line-height:7.7px;color:#5a5a5a;font-weight:normal;text-align:center;">2022-11</div><div class="abs tx" style="left:220.00px;width:300px;top:635.97px;font-size:7.7px;line-height:7.7px;color:#5a5a5a;font-weight:normal;text-align:center;">2022-10</div><div class="abs tx" style="left:284.00px;width:300px;top:635.97px;font-size:7.7px;line-height:7.7px;color:#5a5a5a;font-weight:normal;text-align:center;">13.9</div><div class="abs tx" style="left:368.50px;width:300px;top:635.97px;font-size:7.7px;line-height:7.7px;color:#5a5a5a;font-weight:normal;text-align:center;">4.8</div><div class="abs tx" style="left:453.25px;width:300px;top:635.97px;font-size:7.7px;line-height:7.7px;color:#5a5a5a;font-weight:normal;text-align:center;">11.1</div><div class="abs tx" style="left:220.00px;width:300px;top:657.24px;font-size:7.7px;line-height:7.7px;color:#5a5a5a;font-weight:normal;text-align:center;">2022-09</div><div class="abs tx" style="left:335.10px;width:300px;top:455.75px;font-size:7.7px;line-height:7.7px;color:#4d8ee8;font-weight:normal;text-align:center;">1</div><div class="abs tx" style="left:356.70px;width:300px;top:455.75px;font-size:7.7px;line-height:7.7px;color:#555;font-weight:normal;text-align:center;">2</div><div class="abs tx" style="left:378.30px;width:300px;top:455.75px;font-size:7.7px;line-height:7.7px;color:#555;font-weight:normal;text-align:center;">3</div><div class="abs tx" style="left:399.90px;width:300px;top:455.75px;font-size:7.7px;line-height:7.7px;color:#555;font-weight:normal;text-align:center;">4</div><div class="abs tx" style="left:421.70px;width:300px;top:455.75px;font-size:7.7px;line-height:7.7px;color:#555;font-weight:normal;text-align:center;">5</div><div class="abs tx" style="left:464.70px;width:300px;top:455.75px;font-size:7.7px;line-height:7.7px;color:#555;font-weight:normal;text-align:center;">10</div><div class="abs tx" style="left:511.30px;top:129.80px;font-size:7.6px;line-height:7.6px;color:#555;font-weight:normal;text-align:left;">2013-05</div><div class="abs tx" style="left:579.20px;top:129.80px;font-size:7.6px;line-height:7.6px;color:#555;font-weight:normal;text-align:left;">2023-05</div><div class="abs tx" style="left:511.30px;top:496.00px;font-size:7.6px;line-height:7.6px;color:#555;font-weight:normal;text-align:left;">2013-05</div><div class="abs tx" style="left:579.20px;top:496.00px;font-size:7.6px;line-height:7.6px;color:#555;font-weight:normal;text-align:left;">2023-05</div><div class="abs tx" style="left:27.40px;top:9.65px;font-size:11.1px;line-height:11.1px;color:#333;font-weight:bold;text-align:left;letter-spacing:-0.2px">投建云</div><div class="abs tx" style="left:75.60px;top:10.55px;font-size:7.7px;line-height:7.7px;color:#555;font-weight:normal;text-align:left;">产品</div><div class="abs tx" style="left:102.00px;top:10.55px;font-size:7.7px;line-height:7.7px;color:#555;font-weight:normal;text-align:left;">解决方案</div><div class="abs tx" style="left:143.60px;top:10.55px;font-size:7.7px;line-height:7.7px;color:#555;font-weight:normal;text-align:left;">金融</div><div class="abs tx" style="left:169.60px;top:10.55px;font-size:7.7px;line-height:7.7px;color:#3b6fd8;font-weight:normal;text-align:left;">数据</div><div class="abs tx" style="left:195.50px;top:10.55px;font-size:7.7px;line-height:7.7px;color:#555;font-weight:normal;text-align:left;">商城</div><div class="abs tx" style="left:221.40px;top:10.55px;font-size:7.7px;line-height:7.7px;color:#555;font-weight:normal;text-align:left;">生态</div><div class="abs tx" style="left:247.80px;top:10.55px;font-size:7.7px;line-height:7.7px;color:#555;font-weight:normal;text-align:left;">智库</div><div class="abs tx" style="left:273.70px;top:10.55px;font-size:7.7px;line-height:7.7px;color:#555;font-weight:normal;text-align:left;">研究</div><div class="abs tx" style="left:299.00px;top:10.55px;font-size:7.7px;line-height:7.7px;color:#555;font-weight:normal;text-align:left;">资讯</div><div class="abs tx" style="left:325.50px;top:10.55px;font-size:7.7px;line-height:7.7px;color:#555;font-weight:normal;text-align:left;">关于我们</div><div class="abs tx" style="left:553.80px;top:11.05px;font-size:7.7px;line-height:7.7px;color:#444;font-weight:normal;text-align:left;">会员权益</div><div class="abs tx" style="left:11.25px;top:44.10px;font-size:7.6px;line-height:7.6px;color:#4a4a4a;font-weight:normal;text-align:left;">区域经济速览</div><div class="abs tx" style="left:67.50px;top:44.10px;font-size:7.6px;line-height:7.6px;color:#4a4a4a;font-weight:normal;text-align:left;">地方债与城投</div><div class="abs tx" style="left:123.75px;top:44.10px;font-size:7.6px;line-height:7.6px;color:#4a4a4a;font-weight:normal;text-align:left;">PPP项目库</div><div class="abs tx" style="left:171.60px;top:44.10px;font-size:7.6px;line-height:7.6px;color:#4a4a4a;font-weight:normal;text-align:left;">四库一平台</div><div class="abs tx" style="left:221.00px;top:44.10px;font-size:7.6px;line-height:7.6px;color:#4a4a4a;font-weight:normal;text-align:left;">固定资产投资概览</div><div class="abs tx" style="left:292.70px;top:44.10px;font-size:7.6px;line-height:7.6px;color:#4a4a4a;font-weight:normal;text-align:left;">专项债券</div><div class="abs tx" style="left:-117.50px;width:300px;top:87.82px;font-size:7.55px;line-height:7.55px;color:#fff;font-weight:bold;text-align:center;">全国</div><div class="abs tx" style="left:65.50px;top:87.82px;font-size:7.55px;line-height:7.55px;color:#555;font-weight:normal;text-align:left;">各省</div><div class="abs tx" style="left:105.00px;top:87.82px;font-size:7.55px;line-height:7.55px;color:#555;font-weight:normal;text-align:left;">投资资金来源</div><div class="abs tx" style="left:16.70px;top:133.10px;font-size:9.8px;line-height:9.8px;color:#3a3a3a;font-weight:normal;text-align:left;">固定资产投资及增速</div><div class="abs tx" style="left:16.30px;top:498.80px;font-size:9.8px;line-height:9.8px;color:#3a3a3a;font-weight:normal;text-align:left;">固定资产投资：按建设性质划分</div>
<svg class="abs" style="left:553px;top:604px" width="92" height="30" viewBox="0 0 92 30">
<defs><filter id="sh" x="-30%" y="-30%" width="160%" height="160%"><feGaussianBlur stdDeviation="0.7"/></filter></defs>
<g opacity="0.35" filter="url(#sh)"><ellipse cx="14.6" cy="12.6" rx="8.3" ry="7.3" fill="none" stroke="#888" stroke-width="1"/></g>
<ellipse cx="15" cy="12" rx="8.3" ry="7.3" fill="#fff" stroke="#dadada" stroke-width="0.6"/>
<path d="M9.2 17.6 L7.8 21.6 L13 19.1" fill="#fff" stroke="#aaa" stroke-width="0.7" stroke-linejoin="round"/>
<circle cx="11.8" cy="9.5" r="0.8" fill="#9a9a9a"/><circle cx="19.2" cy="9.5" r="0.8" fill="#9a9a9a"/>
<g opacity="0.5" filter="url(#sh)"><ellipse cx="23.2" cy="19.6" rx="8" ry="7.2" fill="none" stroke="#777" stroke-width="1"/></g>
<ellipse cx="23.7" cy="19" rx="8" ry="7.2" fill="#fff" stroke="#9a9a9a" stroke-width="0.75"/>
<path d="M27.2 25.6 L29.8 26.9 L29.2 24.2" fill="#fff" stroke="#999" stroke-width="0.7" stroke-linejoin="round"/>
<circle cx="21.1" cy="16.1" r="0.8" fill="#8a8a8a"/><circle cx="27" cy="16.1" r="0.8" fill="#8a8a8a"/>
<g transform="translate(38.6,21.6) skewX(-8)">
<text x="0" y="0" font-family="Liberation Sans, sans-serif" font-size="15.2" fill="none" stroke="#fff" stroke-width="1.8" stroke-linejoin="round" letter-spacing="0.4">投建云</text>
<text x="0" y="0" font-family="Liberation Sans, sans-serif" font-size="15.2" fill="#686868" stroke="#686868" stroke-width="0.15" letter-spacing="0.4">投建云</text>
</g>
</svg>
</body></html>
